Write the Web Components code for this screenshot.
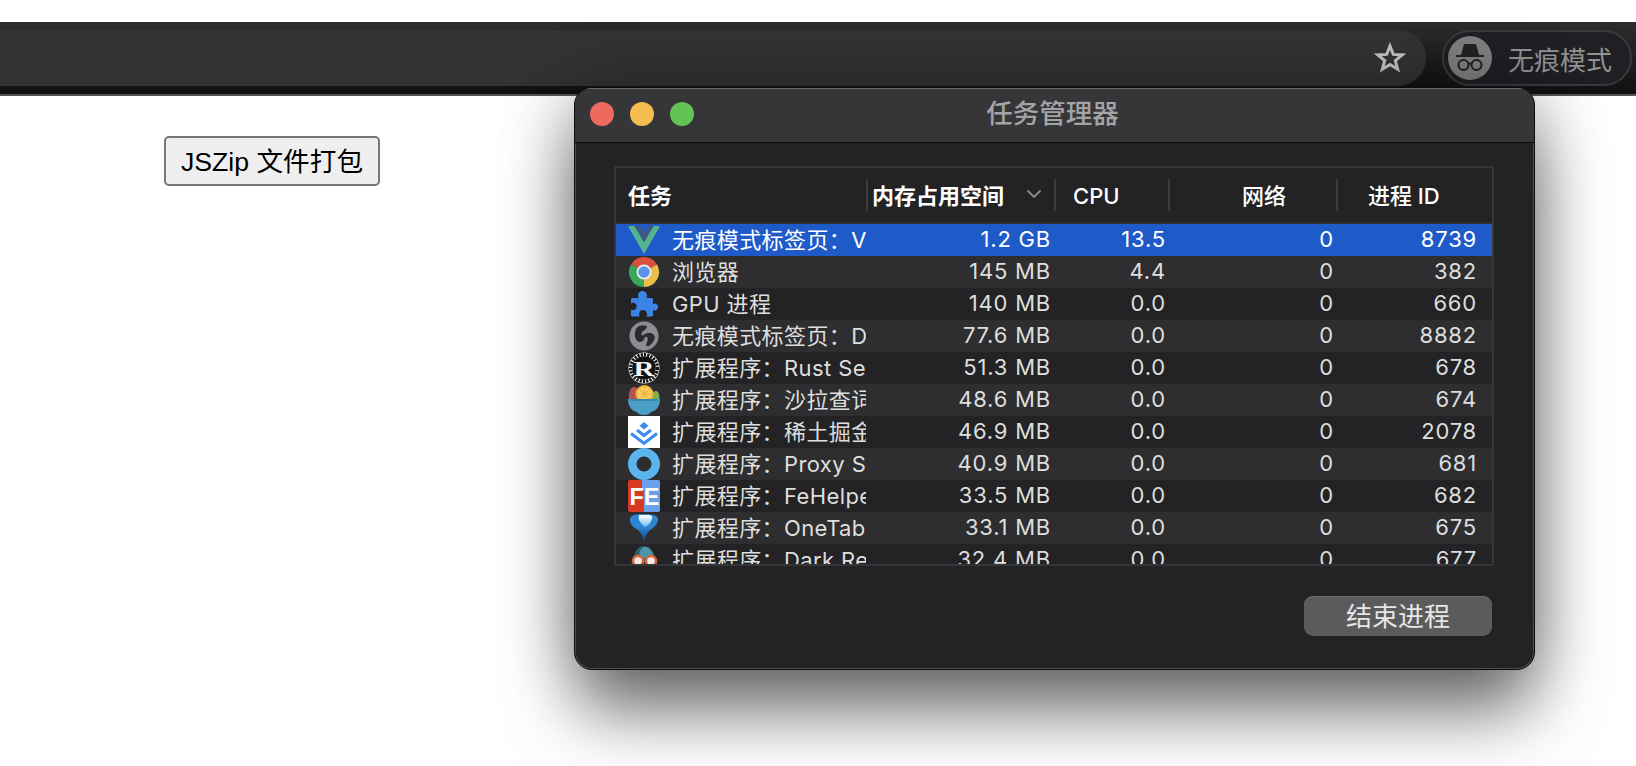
<!DOCTYPE html>
<html lang="zh">
<head>
<meta charset="utf-8">
<title>任务管理器</title>
<style>
html, body { margin: 0; height: 100%; background: #fff; overflow: hidden; }
body { font-family: "Liberation Sans", "Noto Sans CJK SC", sans-serif; position: relative; }
</style>
</head>
<body>
<browser-toolbar></browser-toolbar>
<page-content>
    <page-button>JSZip 文件打包</page-button>
</page-content>
<task-window heading="任务管理器">
    <task-table>
        <task-row selected icon="vue" name="无痕模式标签页：Vue" mem="1.2 GB" cpu="13.5" net="0" pid="8739"></task-row>
        <task-row icon="chrome" name="浏览器" mem="145 MB" cpu="4.4" net="0" pid="382"></task-row>
        <task-row icon="puzzle" name="GPU 进程" mem="140 MB" cpu="0.0" net="0" pid="660"></task-row>
        <task-row icon="globe" name="无痕模式标签页：Dev" mem="77.6 MB" cpu="0.0" net="0" pid="8882"></task-row>
        <task-row icon="rust" name="扩展程序：Rust Search" mem="51.3 MB" cpu="0.0" net="0" pid="678"></task-row>
        <task-row icon="salad" name="扩展程序：沙拉查词" mem="48.6 MB" cpu="0.0" net="0" pid="674"></task-row>
        <task-row icon="juejin" name="扩展程序：稀土掘金" mem="46.9 MB" cpu="0.0" net="0" pid="2078"></task-row>
        <task-row icon="proxy" name="扩展程序：Proxy Switchy" mem="40.9 MB" cpu="0.0" net="0" pid="681"></task-row>
        <task-row icon="fe" name="扩展程序：FeHelper" mem="33.5 MB" cpu="0.0" net="0" pid="682"></task-row>
        <task-row icon="onetab" name="扩展程序：OneTab" mem="33.1 MB" cpu="0.0" net="0" pid="675"></task-row>
        <task-row icon="dark" name="扩展程序：Dark Reader" mem="32.4 MB" cpu="0.0" net="0" pid="677"></task-row>
    </task-table>
</task-window>

<script>
const ICONS = {
    vue: `<svg viewBox="0 0 32 30" width="32" height="30"><path fill="#52b58e" d="M0 1h6.500L16 17 25.500 1H32L16 29z"/><path fill="#3f5a7c" d="M6.500 1H12l4 7 4-7h5.500L16 17z"/></svg>`,
    chrome: `<svg viewBox="0 0 32 32" width="32" height="32"><path fill="#d9503f" d="M16 16 3 8.500A15 15 0 0 1 29 8.500z"/><path fill="#e8c04a" d="M16 16 29 8.500A15 15 0 0 1 16 31z"/><path fill="#3aa65b" d="M16 16V31A15 15 0 0 1 3 8.500z"/><circle cx="16" cy="16" r="7.500" fill="#f1f1f1"/><circle cx="16" cy="16" r="5.800" fill="#5c93e6"/></svg>`,
    puzzle: `<svg viewBox="0 0 32 32" width="32" height="32"><path transform="translate(-2 .5)" fill="#3b84e6" d="M12 7a4.500 4.500 0 0 1 9 0c0 1-.4 1.700-.7 2.500H25.500a1.500 1.500 0 0 1 1.500 1.500v4.500c1.200-.5 2-.8 3-.3a3.700 3.700 0 0 1 0 6.600c-1 .5-1.800.2-3-.3v5a1.500 1.500 0 0 1-1.500 1.500H20.500c.3-1.500.8-2.300.2-3.500a3.800 3.800 0 0 0-7.400 0c-.4 1.200 0 2 .2 3.500H6.500A1.500 1.500 0 0 1 5 26.500V21c1.300.5 2.200.9 3.400.3a3.700 3.700 0 0 0 0-6.800C7.200 14 6.300 14.300 5 15v-4a1.500 1.500 0 0 1 1.500-1.500h6.200C12.400 8.700 12 8 12 7z"/></svg>`,
    globe: `<svg viewBox="0 0 32 32" width="32" height="32"><circle cx="16" cy="16" r="14.500" fill="#8a8e93"/><path fill="#2a2a2c" d="M9 7.500C12 5 16 4.500 18.500 6c1.500 1-.5 3-2.500 4.500-2.500 2-3.500 3-2 5l1.500-.5c2.500-2 5.500-2.500 8.500-1.500 2.500 1 3.500 3 2.500 5.500-1 3-3.500 6-6 7-2 .7-3-.5-2-2.500 1-2.500 2-5 .5-6.500l-2-.5c-.5 2.500-2 5.500-5 5.500-2.500 0-4.500-2.500-5-5.500C6.500 13 7 9.500 9 7.500z"/></svg>`,
    rust: `<svg viewBox="0 0 32 32" width="32" height="32"><circle cx="16" cy="16" r="15.500" fill="#f4f4f4"/><circle cx="16" cy="16" r="13.400" fill="none" stroke="#111" stroke-width="3.200" stroke-dasharray="2.200 1.100"/><circle cx="16" cy="16" r="11.800" fill="#111"/><text x="16" y="23.500" text-anchor="middle" font-family="Liberation Serif, serif" font-weight="700" font-size="22" fill="#f4f4f4" textLength="21" lengthAdjust="spacingAndGlyphs">R</text></svg>`,
    salad: `<svg viewBox="0 0 32 32" width="32" height="32"><path fill="#b5524f" d="M1 17C0 9 2 3 6 3c4 0 7 6 7 14z"/><path fill="#7fb04f" d="M22 17c0-6 3-10 6-10s4 5 3 10z"/><circle cx="16.500" cy="10" r="9" fill="#f3b33d"/><circle cx="16.500" cy="10" r="7" fill="#f9d46c"/><path stroke="#f3b33d" stroke-width="1.200" d="M16.500 3v14M9.500 10h14M11.500 5l10 10M21.500 5l-10 10"/><path fill="#4b9fc6" d="M0 15h32c0 8-4 12-9 13-1 2-3 3-7 3s-6-1-7-3C4 27 0 23 0 15z"/><path fill="#3a87ad" d="M2 15h28v2H2z"/></svg>`,
    juejin: `<svg viewBox="0 0 32 32" width="32" height="32"><rect width="32" height="32" fill="#fff"/><path fill="#3d8cef" d="M16 6 20.500 9.700 16 13.400 11.500 9.700z"/><path fill="none" stroke="#3d8cef" stroke-width="3" d="M9 14 16 19.500 23 14M3 17.500 16 27.300l13-9.800"/></svg>`,
    proxy: `<svg viewBox="0 0 32 32" width="32" height="32"><circle cx="16" cy="16" r="11.750" fill="none" stroke="#5ab5ef" stroke-width="8.500"/></svg>`,
    fe: `<svg viewBox="0 0 32 32" width="32" height="32"><rect width="32" height="32" rx="2" fill="#d93a24"/><path fill="#6aa0ea" d="M14 0h16a2 2 0 0 1 2 2v28a2 2 0 0 1-2 2H16V10h-2z"/><text x="16.500" y="25" text-anchor="middle" font-family="Liberation Sans, sans-serif" font-weight="700" font-size="24" fill="#fff" textLength="30" lengthAdjust="spacingAndGlyphs">FE</text></svg>`,
    onetab: `<svg viewBox="0 0 32 32" width="32" height="32"><defs><linearGradient id="ot" x1="0" y1="0" x2="0" y2="1"><stop offset="0" stop-color="#2f86d4"/><stop offset=".5" stop-color="#2a84d0"/><stop offset="1" stop-color="#123f78"/></linearGradient><linearGradient id="oh" x1="0" y1="0" x2="0" y2="1"><stop offset="0" stop-color="#fff"/><stop offset="1" stop-color="#6fc0f0"/></linearGradient></defs><path fill="url(#ot)" d="M6 3Q16 1 26 3q4 1 4 5-1 6-8 10-4 3-6 12-2-9-6-12C3 14 2 11 2 8q0-4 4-5z"/><path fill="url(#oh)" d="M11 3h11q3 1 2 4-2 6-7 8-4-3-6-7-1-3 0-5z"/></svg>`,
    dark: `<svg viewBox="0 0 32 32" width="32" height="32"><path fill="#2f5a68" d="M5 18C5 8 10 2 16 2s11 6 11 16z"/><path fill="#4d94a6" d="M11 14C11 7 13 3 17 3c5 0 8 5 9 11z"/><circle cx="10" cy="17" r="5" fill="#f3ece6" stroke="#d9663f" stroke-width="2.500"/><circle cx="23" cy="17" r="5" fill="#f3ece6" stroke="#d9663f" stroke-width="2.500"/></svg>`
};

// toolbar across the top of the browser
const toolbarTpl = document.createElement('template');
toolbarTpl.innerHTML = `
<style>
:host { display: block; margin-top: 22px; height: 74px; box-sizing: border-box; padding: 8px 4px 0 0;
    background: linear-gradient(#2d2d2e, #101011); border-bottom: 2px solid #555; }
.row { display: flex; gap: 16px; height: 56px; }
.omni { flex: 1; display: flex; align-items: center; justify-content: flex-end; padding-right: 20px;
    background: #333335; border-radius: 0 28px 28px 0; }
.chip { width: 190px; box-sizing: border-box; display: flex; align-items: center; gap: 16px; padding-left: 4px;
    border: 2px solid #3a3a3e; border-radius: 28px; background: #1f1f24; color: #929292;
    font: 26px "Noto Sans CJK SC", sans-serif; }
.avatar { width: 44px; height: 44px; flex: none; }
</style>
<div class="row">
    <div class="omni">
        <svg width="32" height="32" viewBox="0 0 32 32"><path fill="none" stroke="#c4c4c6" stroke-width="3" stroke-linejoin="miter" d="M16 4l3.300 8.400 9 .5-7 5.700 2.400 8.700L16 22.500l-7.700 4.800 2.400-8.700-7-5.700 9-.5z"/></svg>
    </div>
    <div class="chip">
        <svg class="avatar" viewBox="0 0 44 44">
            <circle cx="22" cy="22" r="22" fill="#7f7f81"/>
            <path fill="#222" d="M16 8h12l3 11H13z"/>
            <path fill="#222" d="M8 19h28v2H8z"/>
            <g fill="none" stroke="#222" stroke-width="2"><circle cx="15.500" cy="29" r="5"/><circle cx="28.500" cy="29" r="5"/><path d="M20.500 28c1-.7 2-.7 3 0"/></g>
        </svg>
        <span>无痕模式</span>
    </div>
</div>`;
class BrowserToolbar extends HTMLElement {
    constructor() {
        super();
        this.attachShadow({ mode: "open" }).appendChild(toolbarTpl.content.cloneNode(true));
    }
}
customElements.define('browser-toolbar', BrowserToolbar);

// page below the toolbar
const contentTpl = document.createElement('template');
contentTpl.innerHTML = `
<style>
:host { display: block; padding: 40px 0 0 164px; }
</style>
<slot></slot>`;
class PageContent extends HTMLElement {
    constructor() {
        super();
        this.attachShadow({ mode: "open" }).appendChild(contentTpl.content.cloneNode(true));
    }
}
customElements.define('page-content', PageContent);

const btnTpl = document.createElement('template');
btnTpl.innerHTML = `
<style>
:host { display: inline-block; }
button { width: 216px; height: 50px; padding: 0 0 3px; box-sizing: border-box; background: #efefef; color: #000;
    border: 2px solid #767676; border-radius: 5px;
    font: 26.67px "Liberation Sans", "Noto Sans CJK SC", sans-serif; }
</style>
<button><slot></slot></button>`;
class PageButton extends HTMLElement {
    constructor() {
        super();
        this.attachShadow({ mode: "open" }).appendChild(btnTpl.content.cloneNode(true));
    }
}
customElements.define('page-button', PageButton);

// the floating task manager window
const windowTpl = document.createElement('template');
windowTpl.innerHTML = `
<style>
:host { position: absolute; left: 574px; top: 87px; width: 961px; height: 583px; box-sizing: border-box;
    display: flex; flex-direction: column; overflow: hidden; background: #232325;
    border: 1px solid #0c0c0c; border-radius: 18px;
    box-shadow: inset 0 0 0 1px #4f4f51, 0 46px 70px -4px rgba(0,0,0,.52), 0 0 70px rgba(0,0,0,.3);
    font-family: Inter, "Noto Sans CJK SC", sans-serif; }
.title { flex: none; height: 45px; padding: 0 4px 8px 0; position: relative; display: flex; align-items: center; justify-content: center;
    background: #363638; border-top: 1px solid #6a6a6c; border-bottom: 1px solid #0c0c0c;
    color: #a4a4a6; font: 500 26.500px "Noto Sans CJK SC", sans-serif; }
.lights { position: absolute; left: 15px; top: 13px; display: flex; gap: 16px; }
.lights i { width: 24px; height: 24px; border-radius: 50%; }
.body { flex: 1; padding: 23px 39px 0; }
.foot { display: flex; justify-content: flex-end; margin: 30px 3px 0 0; }
.end { width: 188px; height: 40px; border: 0; border-radius: 9px; padding: 0 0 5px; background: #5b5b5d;
    box-shadow: inset 0 1px 0 #6d6d6f; color: #e6e6e6; font: 26px "Noto Sans CJK SC", sans-serif; }
</style>
<div class="title">
    <div class="lights"><i style="background:#ee6a5f"></i><i style="background:#f5bd4f"></i><i style="background:#61c454"></i></div>
    <span id="heading"></span>
</div>
<div class="body">
    <slot></slot>
    <div class="foot"><button class="end">结束进程</button></div>
</div>`;
class TaskWindow extends HTMLElement {
    constructor() {
        super();
        const shadowRoot = this.attachShadow({ mode: "open" });
        shadowRoot.appendChild(windowTpl.content.cloneNode(true));
        shadowRoot.querySelector("#heading").textContent = this.getAttribute("heading");
    }
}
customElements.define('task-window', TaskWindow);

const tableTpl = document.createElement('template');
tableTpl.innerHTML = `
<style>
:host { display: block; width: 880px; height: 400px; box-sizing: border-box; border: 2px solid #363638;
    overflow: hidden; color: #fff; font-size: 22px; }
.head { display: grid; grid-template-columns: 250px 188px 114px 168px 156px; height: 56px; box-sizing: border-box; align-items: center;
    border-bottom: 2px solid #2f2f31; font-weight: 500; padding-bottom: 1px; }
.head div { height: 32px; box-sizing: border-box; display: flex; align-items: center; border-left: 2px solid #3d3d3f; white-space: nowrap; padding-bottom: 2px; }
.head div:first-child { border-left: 0; padding-left: 12px; font-weight: 700; }
.head .mem { font-weight: 700; padding-left: 4px; gap: 22px; }
.head .cpu { padding-left: 17px; padding-top: 2px; padding-bottom: 0; }
.head .net { padding-left: 72px; }
.head .pid { padding-left: 30px; }
.rows { height: 340px; overflow: hidden; }
</style>
<div class="head">
    <div>任务</div>
    <div class="mem">内存占用空间<svg width="16" height="10" viewBox="0 0 16 10"><path fill="none" stroke="#8c8c8e" stroke-width="1.800" d="M1.500 1.500 8 8l6.500-6.500"/></svg></div>
    <div class="cpu">CPU</div>
    <div class="net">网络</div>
    <div class="pid">进程 ID</div>
</div>
<div class="rows"><slot></slot></div>`;
class TaskTable extends HTMLElement {
    constructor() {
        super();
        this.attachShadow({ mode: "open" }).appendChild(tableTpl.content.cloneNode(true));
    }
}
customElements.define('task-table', TaskTable);

const rowTpl = document.createElement('template');
rowTpl.innerHTML = `
<style>
:host { display: grid; grid-template-columns: 250px 188px 114px 168px 156px; height: 32px; align-items: center;
    background: #232325; color: #dedede; }
:host(:nth-child(even)) { background: #2e2e30; }
:host([selected]) { background: #1f5bc8; color: #fff; }
.name { display: flex; align-items: center; gap: 12px; padding-left: 12px; overflow: hidden; white-space: nowrap; height: 32px; }
.label { letter-spacing: .4px; padding-bottom: 4px; }
.ico { flex: none; width: 32px; height: 32px; display: flex; align-items: center; justify-content: center; }
.num { text-align: right; padding-right: 2px; letter-spacing: .8px; padding-bottom: 3px; }
.mem { padding-right: 3px; }
.pid { padding-right: 15px; }
</style>
<div class="name"><span class="ico"></span><span class="label"></span></div>
<div class="num mem"></div>
<div class="num cpu"></div>
<div class="num net"></div>
<div class="num pid"></div>`;
class TaskRow extends HTMLElement {
    constructor() {
        super();
        const shadowRoot = this.attachShadow({ mode: "open" });
        shadowRoot.appendChild(rowTpl.content.cloneNode(true));
        shadowRoot.querySelector(".ico").innerHTML = ICONS[this.getAttribute("icon")];
        shadowRoot.querySelector(".label").textContent = this.getAttribute("name");
        for (const key of ["mem", "cpu", "net", "pid"]) {
            shadowRoot.querySelector("." + key).textContent = this.getAttribute(key);
        }
    }
}
customElements.define('task-row', TaskRow);
</script>
</body>
</html>
